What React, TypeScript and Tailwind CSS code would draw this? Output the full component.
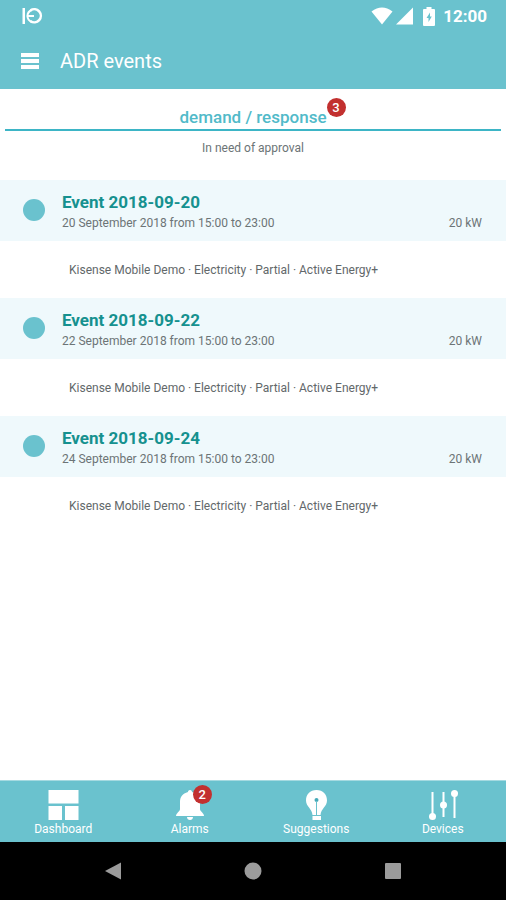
import type { ReactNode } from 'react';

type AdrEvent = { date: string; period: string; power: string };

const events: AdrEvent[] = [
  { date: '2018-09-20', period: '20 September 2018 from 15:00 to 23:00', power: '20 kW' },
  { date: '2018-09-22', period: '22 September 2018 from 15:00 to 23:00', power: '20 kW' },
  { date: '2018-09-24', period: '24 September 2018 from 15:00 to 23:00', power: '20 kW' },
];

function StatusBar() {
  return (
    <div className="flex h-8 items-center justify-between pr-[19px] pl-[22px]">
      <svg width="21" height="18" viewBox="0 0 21 18" fill="none" stroke="currentColor" strokeWidth="2.5" aria-hidden="true">
        <path d="M1.750 1v16" />
        <path d="M8.500 3.300A6.600 6.600 0 1 1 8.500 14.200" />
        <path d="M10 3Q5.500 4.500 5.500 9T10 15M4.500 9H12" strokeWidth="2" />
      </svg>
      <div className="flex items-center">
        <svg width="22" height="18" viewBox="0 0 22 18" fill="currentColor" aria-hidden="true">
          <path d="M0.500 4.500Q11-3.500 21.500 4.500L11 17.500z" />
        </svg>
        <svg className="ml-[3px]" width="17" height="18" viewBox="0 0 17 18" fill="currentColor" aria-hidden="true">
          <path d="M17 0.500v17H0z" />
        </svg>
        <svg className="ml-[10px]" width="12" height="19" viewBox="0 0 12 19" fill="currentColor" aria-hidden="true">
          <path fillRule="evenodd" d="M3.500 0h5v2H11q1 0 1 1v15q0 1-1 1H1q-1 0-1-1V3q0-1 1-1h2.500zM7 5.500L3.500 11H5.500V15L8.800 9.500H7z" />
        </svg>
        <span className="ml-2 text-[17px] leading-6 font-bold">12:00</span>
      </div>
    </div>
  );
}

function CountBadge({ value }: { value: number }) {
  return (
    <span className="flex size-[19px] items-center justify-center rounded-full bg-[#c2302f] text-[13px] leading-none font-medium text-white">
      {value}
    </span>
  );
}

function EventItem({ event }: { event: AdrEvent }) {
  return (
    <li>
      <div className="flex bg-[#eff9fc] pt-3 pr-6 pb-2 pl-[23px]">
        <span className="mt-[7px] size-[22px] shrink-0 rounded-full bg-[#6ac2ce]" />
        <div className="ml-[17px] flex-1">
          <h2 className="text-[17px] leading-[21px] font-bold text-[#16918f]">Event {event.date}</h2>
          <div className="flex justify-between text-xs leading-5 text-[#6c7476]">
            <span>{event.period}</span>
            <span>{event.power}</span>
          </div>
        </div>
      </div>
      <p className="pt-[19px] pb-[18px] pl-[69px] text-xs leading-5 text-[#62686a]">
        Kisense Mobile Demo · Electricity · Partial · Active Energy+
      </p>
    </li>
  );
}

function FooterLink({ label, badge, children }: { label: string; badge?: number; children: ReactNode }) {
  return (
    <a href="#" className="flex flex-1 flex-col items-center pt-2 pb-[5px]">
      <span className="relative">
        <svg width="32" height="32" viewBox="0 0 32 32" fill="currentColor" aria-hidden="true">
          {children}
        </svg>
        {badge !== undefined && (
          <span className="absolute -top-1 left-[19px]">
            <CountBadge value={badge} />
          </span>
        )}
      </span>
      <span className="text-xs leading-4">{label}</span>
    </a>
  );
}

export default function App() {
  return (
    <div className="flex min-h-screen flex-col bg-white font-['Roboto',sans-serif]">
      <header className="bg-[#6ac2ce] text-white">
        <StatusBar />
        <div className="flex h-[57px] items-center pl-[21px]">
          <button type="button" aria-label="Menu" className="flex w-[18px] flex-col gap-0.5">
            <span className="h-1 w-full bg-white" />
            <span className="h-1 w-full bg-white" />
            <span className="h-1 w-full bg-white" />
          </button>
          <h1 className="ml-[21px] text-xl leading-6">ADR events</h1>
        </div>
      </header>

      <main className="flex-1">
        <div className="mx-[5px] flex justify-center border-b-2 border-[#3db5c6] pt-4">
          <button type="button" className="relative text-[17px] leading-6 font-medium text-[#51bac9]">
            demand / response
            <span className="absolute -top-[7px] left-full">
              <CountBadge value={3} />
            </span>
          </button>
        </div>
        <p className="pt-[7px] pb-[22px] text-center text-xs leading-5 text-[#6c7476]">In need of approval</p>
        <ul>
          {events.map((event) => (
            <EventItem key={event.date} event={event} />
          ))}
        </ul>
      </main>

      <nav className="flex border-t border-[#a5dae1] bg-[#6ac2ce] text-white">
        <FooterLink label="Dashboard">
          <path d="M1.500 1h30v13.500h-30zM1.500 17h13.500v14H1.500zM18 17h13.500v14H18z" />
        </FooterLink>
        <FooterLink label="Alarms" badge={2}>
          <path d="M16 1c-1.500 0-2 1-2 2C8.500 4.500 6 8 6 13v7c0 2.500-4 4-4 7h28c0-3-4-4.500-4-7v-7c0-5-2.500-8.500-8-10 0-1-.5-2-2-2zM13 28h6c0 2-1.300 3-3 3s-3-1-3-3z" />
        </FooterLink>
        <FooterLink label="Suggestions">
          <path d="M16.500 1C10 1 6 5.500 6 11.500c0 6 6 8 6.500 14.500h8c.5-6.500 6.500-8.500 6.500-14.500C27 5.500 23 1 16.500 1zM12.500 27h8.500v4h-8.500z" />
          <circle cx="16.500" cy="11" r="2" fill="#45a9b8" />
          <path d="M16.500 12v14" stroke="#6ac2ce" />
        </FooterLink>
        <FooterLink label="Devices">
          <path d="M5.500 3v24M16.500 3v25M27.500 5v24" stroke="currentColor" strokeWidth="2" />
          <circle cx="5.500" cy="27.500" r="3.500" />
          <circle cx="16.500" cy="16" r="3.500" />
          <circle cx="27.500" cy="4.500" r="3.500" />
        </FooterLink>
      </nav>

      <div className="flex h-[58px] items-center justify-center gap-[122px] bg-black text-[#9b9b9b]">
        <button type="button" aria-label="Back">
          <svg width="18" height="18" viewBox="0 0 18 18" fill="currentColor"><path d="M17 0.500v17L1 9z" /></svg>
        </button>
        <button type="button" aria-label="Home">
          <svg width="18" height="18" viewBox="0 0 18 18" fill="currentColor"><circle cx="9" cy="9" r="8.500" /></svg>
        </button>
        <button type="button" aria-label="Recent apps">
          <svg width="18" height="18" viewBox="0 0 18 18" fill="currentColor"><rect x="1" y="1" width="16" height="16" rx="1" /></svg>
        </button>
      </div>
    </div>
  );
}
